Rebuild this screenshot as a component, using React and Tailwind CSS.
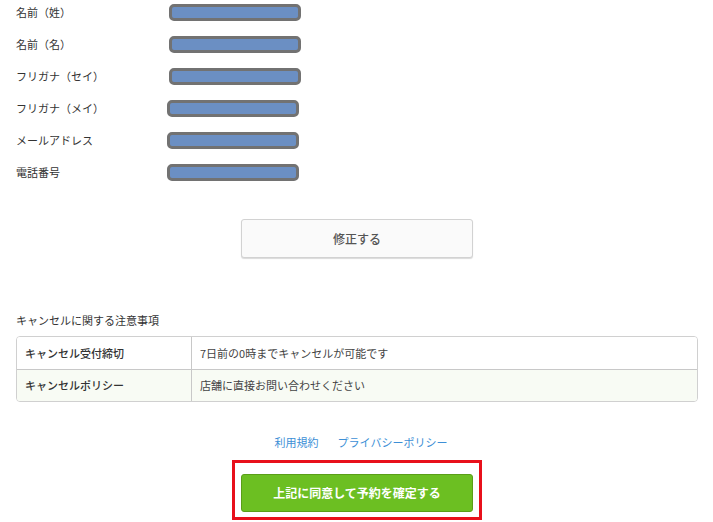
const fields = [
  "名前（姓）",
  "名前（名）",
  "フリガナ（セイ）",
  "フリガナ（メイ）",
  "メールアドレス",
  "電話番号",
];

const policies = [
  { label: "キャンセル受付締切", value: "7日前の0時までキャンセルが可能です", bg: "bg-white" },
  { label: "キャンセルポリシー", value: "店舗に直接お問い合わせください", bg: "bg-[#f8fbf4]" },
];

const App = () => {
  return (
    <div
      className="w-[713px] h-[522px] overflow-hidden bg-white pl-4 pr-[15px] text-[#333]"
      style={{ fontFamily: '"Noto Sans CJK JP", "Liberation Sans", sans-serif' }}
    >
      {/* Customer info */}
      <div className="-mt-1">
        {fields.map((f, i) => (
          <div key={f} className="flex h-8 items-center">
            <div className="w-[153px] text-[11px] leading-none">{f}</div>
            <div
              className={`h-[17px] w-[132px] rounded-[5px] border-[3px] border-[#727272] bg-[#6b8fc3] ${i > 2 ? "-ml-[2px]" : ""}`}
            />
          </div>
        ))}
      </div>

      {/* Edit button */}
      <div className="mt-[31px] flex justify-center">
        <button className="h-[39px] w-[232px] rounded-[3px] border border-[#d2d2d2] bg-[#fafafa] text-[12px] font-medium text-[#555] shadow-[0_1px_1px_rgba(0,0,0,0.15)]">
          修正する
        </button>
      </div>

      {/* Cancel notes */}
      <div className="mt-[57px] text-[11px] leading-none">キャンセルに関する注意事項</div>
      <div className="mt-[10px] overflow-hidden rounded-[4px] border border-[#d0d0d0] text-[11px]">
        {policies.map((p, i) => (
          <div key={p.label} className={`flex h-[32px] ${p.bg} ${i > 0 ? "border-t border-[#c8c8c8]" : ""}`}>
            <div className="flex w-[175px] items-center border-r border-[#c8c8c8] pl-2 font-medium text-[#333]">
              {p.label}
            </div>
            <div className="flex flex-1 items-center pl-2 text-[#444]">{p.value}</div>
          </div>
        ))}
      </div>

      {/* Links */}
      <div className="mt-[35px] flex justify-center gap-[19px] pl-2 text-[11px] leading-none text-[#3d8fd6]">
        <a>利用規約</a>
        <a>プライバシーポリシー</a>
      </div>

      {/* Confirm */}
      <div className="mt-[12px] flex justify-center">
        <div className="border-[3px] border-[#e8101b] px-[6px] pt-[11px] pb-[5px]">
          <button className="h-[38px] w-[232px] rounded-[3px] border border-[#5a9e18] bg-[#6cbf22] text-[12px] font-bold text-white">
            上記に同意して予約を確定する
          </button>
        </div>
      </div>
    </div>
  );
};

export default App;
